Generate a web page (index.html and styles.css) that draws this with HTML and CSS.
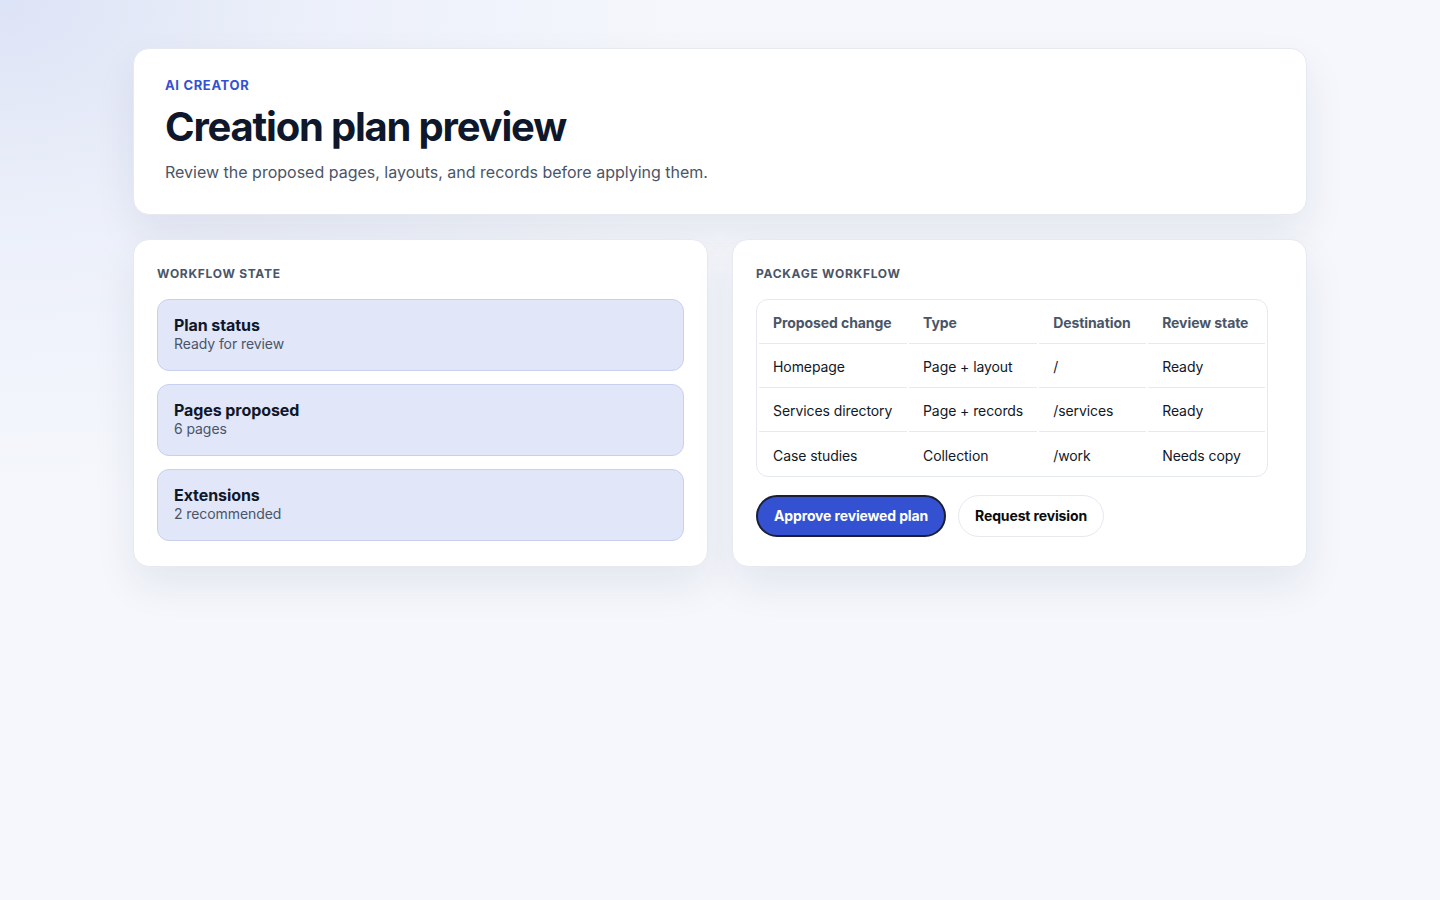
FILE: index.html
```html
<!DOCTYPE html>
<html lang="en">
<head>
<meta charset="utf-8">
<title>Creation plan preview</title>
<link rel="stylesheet" href="styles.css">
</head>
<body>
<main class="page">
  <section class="card hero">
    <p class="eyebrow">AI CREATOR</p>
    <h1 class="title">Creation plan preview</h1>
    <p class="lead">Review the proposed pages, layouts, and records before applying them.</p>
  </section>
  <div class="grid">
    <section class="card panel">
      <h2 class="section-label">WORKFLOW STATE</h2>
      <div class="status-list">
        <div class="status">
          <div class="status-title">Plan status</div>
          <div class="status-sub">Ready for review</div>
        </div>
        <div class="status">
          <div class="status-title">Pages proposed</div>
          <div class="status-sub">6 pages</div>
        </div>
        <div class="status">
          <div class="status-title">Extensions</div>
          <div class="status-sub">2 recommended</div>
        </div>
      </div>
    </section>
    <section class="card panel">
      <h2 class="section-label">PACKAGE WORKFLOW</h2>
      <div class="table-wrap">
        <table class="plan-table">
          <thead>
            <tr><th>Proposed change</th><th>Type</th><th>Destination</th><th>Review state</th></tr>
          </thead>
          <tbody>
            <tr><td>Homepage</td><td>Page + layout</td><td>/</td><td>Ready</td></tr>
            <tr><td>Services directory</td><td>Page + records</td><td>/services</td><td>Ready</td></tr>
            <tr><td>Case studies</td><td>Collection</td><td>/work</td><td>Needs copy</td></tr>
          </tbody>
        </table>
      </div>
      <div class="actions">
        <button class="btn btn-primary">Approve reviewed plan</button>
        <button class="btn btn-secondary">Request revision</button>
      </div>
    </section>
  </div>
</main>
</body>
</html>
```
FILE: styles.css
```css
* { box-sizing: border-box; }
html, body { margin: 0; height: 100%; }
body {
  font-family: Inter, "Noto Sans", "Liberation Sans", sans-serif;
  color: #0f172a;
  letter-spacing: -0.005em;
  background:
    radial-gradient(ellipse 700px 500px at 0% 0%, #dde3f6 0%, rgba(230,235,249,0.6) 45%, rgba(245,247,252,0) 100%),
    #f5f7fc;
  min-height: 900px;
}
.page {
  width: 1174px;
  margin: 0 auto;
  padding-top: 48px;
  display: flex;
  flex-direction: column;
  gap: 24px;
}
.card {
  background: #ffffff;
  border: 1px solid #e6e9f0;
  border-radius: 16px;
  box-shadow: 0 18px 40px rgba(30, 41, 80, 0.08);
}
.hero {
  padding: 28px 31px 30px;
}
.eyebrow {
  margin: 0;
  color: #3451d1;
  font-size: 13px;
  font-weight: 700;
  letter-spacing: 0.05em;
  line-height: 16px;
}
.title {
  margin: 10px 0 0;
  font-size: 40px;
  line-height: 48px;
  font-weight: 700;
  letter-spacing: -0.03em;
  color: #0f172a;
}
.lead {
  margin: 9px 0 0;
  font-size: 16px;
  line-height: 24px;
  letter-spacing: 0;
  color: #4a5568;
}
.grid {
  display: grid;
  grid-template-columns: 1fr 1fr;
  gap: 24px;
}
.panel {
  padding: 27px 23px 25px;
}
.section-label {
  margin: 0 0 18px;
  font-size: 12px;
  line-height: 14px;
  font-weight: 700;
  letter-spacing: 0.06em;
  color: #4a5568;
}
.status-list {
  display: flex;
  flex-direction: column;
  gap: 13px;
}
.status {
  background: #e1e6f9;
  border: 1px solid #c8d0ee;
  border-radius: 12px;
  padding: 15px 16px 17px;
  height: 72px;
}
.status-title {
  font-size: 16px;
  line-height: 20px;
  font-weight: 700;
  color: #0f172a;
}
.status-sub {
  font-size: 14px;
  line-height: 18px;
  color: #4a5568;
}
.table-wrap {
  width: fit-content;
  margin-top: 1px;
  border: 1px solid #e6e9f0;
  border-radius: 12px;
  overflow: hidden;
}
.plan-table {
  border-collapse: separate;
  border-spacing: 2px 0;
  font-size: 14px;
  line-height: 18px;
}
.plan-table th,
.plan-table td {
  text-align: left;
  padding: 14px 14px 11px;
  height: 44px;
  white-space: nowrap;
}
.plan-table th {
  font-weight: 700;
  color: #4a5568;
  border-bottom: 1px solid #e6e9f0;
}
.plan-table td {
  color: #111827;
  border-bottom: 1px solid #e6e9f0;
}
.plan-table tbody tr:last-child td { border-bottom: none; }
.plan-table th:nth-child(1), .plan-table td:nth-child(1) { width: 148px; }
.plan-table th:nth-child(2), .plan-table td:nth-child(2) { width: 124px; }
.plan-table th:nth-child(3), .plan-table td:nth-child(3) { width: 107px; }
.plan-table th:nth-child(4), .plan-table td:nth-child(4) { width: 117px; }
.actions {
  display: flex;
  gap: 12px;
  margin-top: 18px;
}
.btn {
  font-family: inherit;
  font-size: 14px;
  font-weight: 700;
  line-height: 18px;
  letter-spacing: -0.01em;
  height: 42px;
  border-radius: 999px;
  padding: 0 16px;
  cursor: pointer;
}
.btn-primary {
  background: #3451d1;
  color: #ffffff;
  border: 2px solid #1a1f36;
}
.btn-secondary {
  background: #ffffff;
  color: #0b0b0b;
  border: 1px solid #e6e9f0;
}
```
